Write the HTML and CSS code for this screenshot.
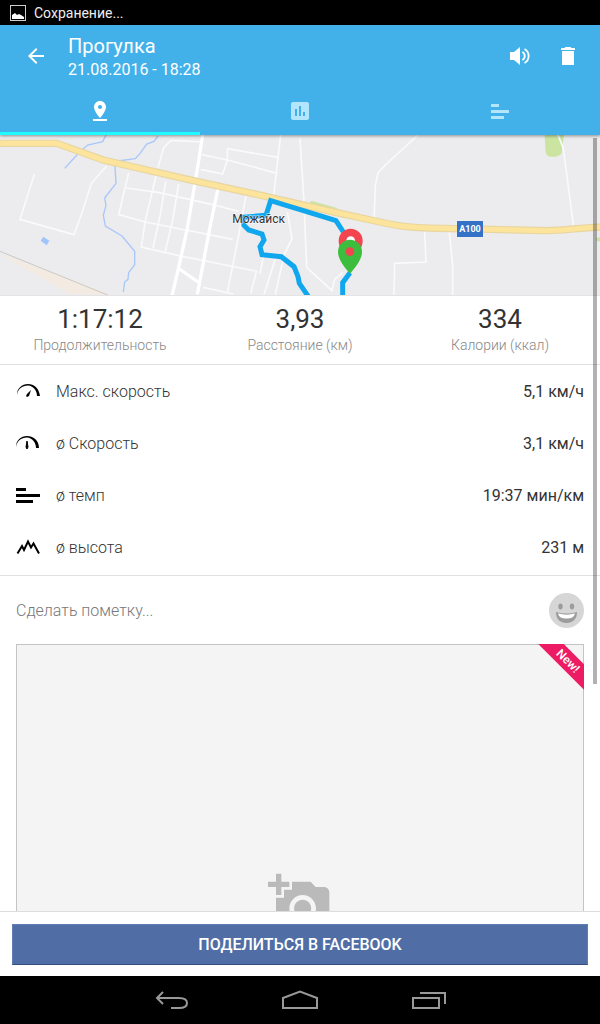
FILE: index.html
```html
<!DOCTYPE html>
<html lang="ru">
  <head>
    <meta charset="UTF-8" />
    <meta name="viewport" content="width=device-width, initial-scale=1.0" />
    <title>Прогулка</title>
    <link rel="stylesheet" href="styles.css">
  </head>
  <body>
    <div class="status-bar">
      <svg class="status-icon" viewBox="0 0 16 16">
        <rect x="0.5" y="0.5" width="15" height="15" fill="none" stroke="#ccc" />
        <path d="M2 14v-4l3-2 2 2 2-1 2 1 3 2v2z" fill="#fff" />
      </svg>
      <span>Сохранение...</span>
    </div>

    <header class="app-bar">
      <div class="toolbar">
        <button class="icon-btn" aria-label="Назад">
          <svg viewBox="0 0 24 24"><path d="M20 11H7.83l5.59-5.59L12 4l-8 8 8 8 1.41-1.41L7.83 13H20v-2z" /></svg>
        </button>
        <div class="heading">
          <h1 class="title">Прогулка</h1>
          <p class="date">21.08.2016 - 18:28</p>
        </div>
        <button class="icon-btn" aria-label="Звук">
          <svg viewBox="0 0 24 24">
            <path d="M2 8v8h4l6 5V3L6 8z" />
            <path d="M14.3 8a4.5 4.5 0 0 1 0 8M16.5 5a8 8 0 0 1 0 14" fill="none" stroke="#fff" stroke-width="1.8" />
          </svg>
        </button>
        <button class="icon-btn" aria-label="Удалить">
          <svg viewBox="0 0 24 24"><path d="M6 21h12V7H6v14zM19 4h-3.5l-1-1h-5l-1 1H5v2h14V4z" /></svg>
        </button>
      </div>
      <nav class="tabs">
        <a class="tab active" href="#map" aria-label="Карта">
          <svg viewBox="0 0 24 24"><path d="M18 8c0-3.31-2.69-6-6-6S6 4.69 6 8c0 4.5 6 11 6 11s6-6.5 6-11zm-8 0c0-1.1.9-2 2-2s2 .9 2 2-.89 2-2 2c-1.1 0-2-.9-2-2zM5 20v2h14v-2H5z" /></svg>
        </a>
        <a class="tab" href="#charts" aria-label="Графики">
          <svg viewBox="0 0 24 24"><path d="M19 3H5c-1.1 0-2 .9-2 2v14c0 1.1.9 2 2 2h14c1.1 0 2-.9 2-2V5c0-1.1-.9-2-2-2zM9 17H7v-7h2v7zm4 0h-2V7h2v10zm4 0h-2v-4h2v4z" /></svg>
        </a>
        <a class="tab" href="#splits" aria-label="Темп">
          <svg viewBox="0 0 24 24"><path d="M3 5h8v3H3zM3 11h18v3H3zM3 17h13v3H3z" /></svg>
        </a>
      </nav>
    </header>

    <main class="content">
      <div class="scroller">
        <svg class="map" id="map" viewBox="0 9 1800 480" preserveAspectRatio="xMidYMid slice">
          <rect width="1800" height="500" fill="#ecebed" />
          <!-- parks -->
          <path d="M1634 9h58l-6 42c3 18-12 24-30 23-18 1-20-12-20-30zM934 206l70 20c16 6 20 16 26 32l-105-34zM1788 318l12-2v12h-10z" fill="#cbe4a2" />
          <!-- railway -->
          <path d="M0 365l210 122h120z" fill="#f3ebe2" />
          <path d="M0 358l325 132" fill="none" stroke="#c9c9c4" stroke-width="3" />
          <!-- water -->
          <g fill="none" stroke="#a8c8fa" stroke-width="4">
            <path d="M318 9l-10 20-45 10-25 22-44 48" />
            <path d="M474 12l-12 16-22 8-18 26-16 18-62 8 4 66-34 44 4 22-8 30 6 32 50 30 38 46v40l-18 24-2 20-10 8-4 30" />
          </g>
          <path d="M130 314l18 12-8 14-18-14z" fill="#9fc5fb" />
          <!-- streets -->
          <g fill="none" stroke="#fafafa" stroke-width="5">
            <path d="M103 127L60 262l162 46 26-72 26-82 46-52" />
            <path d="M608 30l-95-5-22 22-17 60M606 68l76 16-14 42-66-14M682 84l150 40M682 50l152 26M682 50v36M842 9l-22 190" />
            <path d="M386 122l-30 126 80 22 262 52M378 168l100 14 160 36 78 20" />
            <path d="M472 115l-36 150-12 80 112 26 230 46M497 148l-16 100-22 100M536 156l-18 108-22 94" />
            <path d="M738 190l-22 120-34 172M610 466l90 20M770 415l-18 70M790 375l-10 50M826 380l-34 108M862 240l14 80-24 50-26 118" />
            <path d="M900 20l12 190 8 196 76 70 8-34 24-20M1254 9l-98 90-22 24-8 38-4 110M1674 9l16 40 30 230M1274 300l4 90-94 4-2 94M1348 300l10 100v90" />
          </g>
          <g fill="none" stroke="#fff" stroke-width="10">
            <path d="M608 9l-14 90-32 190-28 126-18 76M655 165l-25 120-38 202M534 408l60 42" />
          </g>
          <!-- highway -->
          <path d="M-10 34h180l140 50 270 62 230 50 200 46 130 28c70 16 100 18 240 20l260 6c60 0 100-10 170-11" fill="none" stroke="#e8d6a0" stroke-width="22" />
          <path d="M-10 34h180l140 50 270 62 230 50 200 46 130 28c70 16 100 18 240 20l260 6c60 0 100-10 170-11" fill="none" stroke="#fde49c" stroke-width="15" />
          <!-- recorded track -->
          <path class="track" d="M1030 300l-22-34-196-60-14 44-70 6 4 24 14 14 40 12 6 18-12 20 6 24 58 6 38 30 12 30 4 20 30 44" />
          <path class="track" d="M1050 422l-22 30v44" />
          <text class="map-city" x="776" y="272">Можайск</text>
          <rect x="1371" y="267" width="78" height="48" fill="#3472c8" />
          <text class="map-road" x="1410" y="300">A100</text>
          <path d="M1052 290a36 36 0 0 1 36 36c0 25-22 50-36 66-14-16-36-41-36-66a36 36 0 0 1 36-36z" fill="#f2454f" />
          <circle cx="1052" cy="326" r="13" fill="#fff" />
          <path d="M1050 323a36 36 0 0 1 36 36c0 25-22 50-36 66-14-16-36-41-36-66a36 36 0 0 1 36-36z" fill="#3dbd3d" />
          <circle cx="1050" cy="359" r="13" fill="#f2454f" />
        </svg>

        <section class="summary">
          <div class="stat">
            <div class="stat-value">1:17:12</div>
            <div class="stat-label">Продолжительность</div>
          </div>
          <div class="stat">
            <div class="stat-value">3,93</div>
            <div class="stat-label">Расстояние (км)</div>
          </div>
          <div class="stat">
            <div class="stat-value">334</div>
            <div class="stat-label">Калории (ккал)</div>
          </div>
        </section>

        <dl class="details">
          <div class="row">
            <svg viewBox="0 0 24 24">
              <path d="M1 16C1 9 6 5 12 5s11 4 12 12h-3c0-6-4-10-9-10.500C6 6.500 2 10 1 16z" />
              <path d="M15 11l-2 6-2 1-1-1 1-2z" />
            </svg>
            <dt>Макс. скорость</dt>
            <dd>5,1 км/ч</dd>
          </div>
          <div class="row">
            <svg viewBox="0 0 24 24">
              <path d="M0 16C0 9 5 5 11 5s12 4 12 12h-3c0-6-4-10-9-10.500C5 6.500 1 10 0 16z" />
              <path d="M11 10l1 6-1 2-1-2z" stroke="#000" />
            </svg>
            <dt>ø Скорость</dt>
            <dd>3,1 км/ч</dd>
          </div>
          <div class="row">
            <svg viewBox="0 0 24 24"><path d="M0 5h10v3H0zM0 11h24v3H0zM0 17h17v3H0z" /></svg>
            <dt>ø темп</dt>
            <dd>19:37 мин/км</dd>
          </div>
          <div class="row">
            <svg viewBox="0 0 24 24"><path d="M1.5 18.500l4.500-7.500 2 4L12 6.500l3 6 2.500-4 5.500 10" fill="none" stroke="#000" stroke-width="2" /></svg>
            <dt>ø высота</dt>
            <dd>231 м</dd>
          </div>
        </dl>

        <div class="note">
          <input class="note-input" type="text" placeholder="Сделать пометку..." aria-label="Сделать пометку" />
          <button class="mood-btn" aria-label="Настроение">
            <svg viewBox="0 0 36 36">
              <circle cx="18.5" cy="18.5" r="17.5" fill="#d6d6d6" />
              <ellipse cx="12.5" cy="14.5" rx="2.2" ry="3" fill="#9c9c9c" />
              <ellipse cx="24" cy="14.5" rx="2.2" ry="3" fill="#9c9c9c" />
              <path d="M8 20q10.500 3 21 0c0 7-4 11-10.500 11S8 27 8 20z" fill="#9c9c9c" />
              <path d="M10 21.500q8.500 2.300 17 0c-1 4-4 5-8.500 5s-7.500-1-8.500-5z" fill="#fff" />
            </svg>
          </button>
        </div>

        <button class="photo" aria-label="Добавить фото">
          <svg class="photo-icon" viewBox="0 0 24 24"><path d="M3 4V1h2v3h3v2H5v3H3V6H0V4h3zm3 6V7h3V4h7l1.83 2H21c1.1 0 2 .9 2 2v12c0 1.1-.9 2-2 2H5c-1.1 0-2-.9-2-2V10h3zm7 9c2.76 0 5-2.24 5-5s-2.24-5-5-5-5 2.24-5 5 2.24 5 5 5zm-3.2-5c0 1.77 1.43 3.2 3.2 3.2s3.2-1.43 3.2-3.2-1.43-3.2-3.2-3.2-3.2 1.43-3.2 3.2z" /></svg>
          <span class="ribbon"><span class="ribbon-text">New!</span></span>
        </button>
      </div>
      <div class="scroll-thumb"></div>
    </main>

    <footer class="share">
      <button class="share-btn">ПОДЕЛИТЬСЯ В FACEBOOK</button>
    </footer>

    <div class="nav-bar">
      <button class="nav-btn" aria-label="Назад">
        <svg viewBox="0 0 36 24"><path d="M9 2L3 8l6 6M3 8h22c5 0 8 2 8 5s-3 5-8 5h-8" /></svg>
      </button>
      <button class="nav-btn" aria-label="Домой">
        <svg viewBox="0 0 36 24"><path d="M1 18V8l17-6.500L35 8v10z" /></svg>
      </button>
      <button class="nav-btn" aria-label="Недавние приложения">
        <svg viewBox="0 0 36 24"><path d="M3 8h26v10H3zM10 3h25v11" /></svg>
      </button>
    </div>
  </body>
</html>
```
FILE: styles.css
```css
* {
  margin: 0;
  padding: 0;
  box-sizing: border-box;
}

body {
  font-family: Roboto, sans-serif;
  background: #fff;
  color: #333;
  height: 100vh;
  display: flex;
  flex-direction: column;
}

button {
  font-family: inherit;
  background: none;
  border: none;
  cursor: pointer;
}

svg {
  display: block;
}

.status-bar {
  display: flex;
  align-items: center;
  gap: 8px;
  height: 25px;
  padding: 0 10px;
  background: #000;
  color: #eee;
  font-size: 14px;
}

.status-icon {
  width: 16px;
  height: 16px;
}

.app-bar {
  position: relative;
  z-index: 1;
  background: #42b1e9;
  color: #fff;
  box-shadow: 0 1px 3px rgba(0, 0, 0, 0.4);
}

.toolbar {
  display: flex;
  align-items: center;
  height: 62px;
  padding: 0 8px 0 12px;
}

.icon-btn {
  width: 48px;
  height: 48px;
  padding: 12px;
}

.icon-btn svg {
  width: 24px;
  height: 24px;
  fill: #fff;
}

.heading {
  flex: 1;
  padding: 4px 0 0 8px;
}

.title {
  font-size: 20px;
  font-weight: 400;
  line-height: 24px;
}

.date {
  font-size: 16px;
  line-height: 24px;
}

.tabs {
  display: flex;
  height: 48px;
}

.tab {
  flex: 1;
  display: flex;
  align-items: center;
  justify-content: center;
  border-top: 3px solid transparent;
  border-bottom: 3px solid transparent;
}

.tab svg {
  width: 24px;
  height: 24px;
  fill: #b3e5fc;
}

.tab.active {
  border-bottom-color: #1ffaff;
}

.tab.active svg {
  fill: #fff;
}

.content {
  position: relative;
  flex: 1;
  min-height: 0;
}

.scroller {
  height: 100%;
  overflow-y: auto;
  scrollbar-width: none;
}

.scroll-thumb {
  position: absolute;
  top: 3px;
  right: 3px;
  width: 4px;
  height: 546px;
  background: rgba(0, 0, 0, 0.3);
}

.map {
  width: 100%;
  height: 160px;
}

.track {
  fill: none;
  stroke: #10a7ee;
  stroke-width: 15px;
}

.map-city {
  font-size: 36px;
  fill: #333;
  text-anchor: middle;
  stroke: #fff;
  stroke-width: 4px;
  stroke-opacity: 0.6;
  paint-order: stroke;
}

.map-road {
  font-size: 27px;
  font-weight: 700;
  fill: #fff;
  text-anchor: middle;
}

.summary {
  display: flex;
  padding: 7px 0 9px;
  border-top: 1px solid #e4e4e4;
  border-bottom: 1px solid #e0e0e0;
  text-align: center;
}

.stat {
  flex: 1;
}

.stat-value {
  font-size: 26px;
  line-height: 32px;
}

.stat-label {
  font-size: 14px;
  font-weight: 300;
  line-height: 20px;
  color: #888;
}

.details {
  padding-bottom: 2px;
  border-bottom: 1px solid #e0e0e0;
}

.row {
  display: flex;
  align-items: center;
  gap: 16px;
  height: 52px;
  padding: 0 16px;
  font-size: 16px;
}

.row svg {
  width: 24px;
  height: 24px;
}

.row dt {
  flex: 1;
  font-weight: 300;
}

.note {
  display: flex;
  align-items: center;
  height: 68px;
  padding: 0 16px;
}

.note-input {
  flex: 1;
  border: none;
  outline: none;
  font-family: inherit;
  font-size: 16px;
  font-weight: 300;
  color: #333;
}

.note-input::placeholder {
  color: #777;
}

.mood-btn svg {
  width: 36px;
  height: 36px;
}

.photo {
  position: relative;
  display: flex;
  justify-content: center;
  width: calc(100% - 32px);
  margin: 0 16px 16px;
  padding: 226px 0;
  background: #f4f4f4;
  border: 1px solid #c4c4c4;
}

.photo-icon {
  width: 64px;
  height: 64px;
  fill: #bababa;
}

.ribbon {
  position: absolute;
  top: -1px;
  right: -1px;
  width: 46px;
  height: 46px;
  overflow: hidden;
}

.ribbon-text {
  position: absolute;
  top: 8px;
  left: -10px;
  width: 80px;
  transform: rotate(45deg);
  background: #ec1b64;
  color: #fff;
  font-size: 12px;
  font-weight: 500;
  line-height: 18px;
  text-align: center;
}

.share {
  padding: 12px 12px 11px;
  border-top: 1px solid #ddd;
  background: #fff;
}

.share-btn {
  display: block;
  width: 100%;
  height: 41px;
  background: #506ea5;
  border: 1px solid #5f7db3;
  border-bottom-color: #344e80;
  color: #fff;
  font-size: 16px;
  font-weight: 500;
}

.nav-bar {
  display: flex;
  justify-content: center;
  gap: 56px;
  height: 48px;
  background: #000;
}

.nav-btn {
  display: flex;
  align-items: center;
  justify-content: center;
  width: 72px;
  padding-top: 4px;
}

.nav-btn svg {
  width: 36px;
  height: 24px;
  fill: none;
  stroke: #999;
  stroke-width: 2px;
}
```
